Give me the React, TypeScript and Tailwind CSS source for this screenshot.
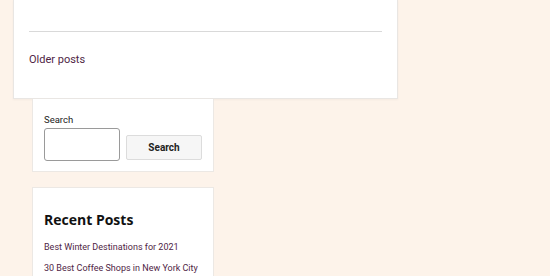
export default function App() {
  return (
    <div className="h-[276px] w-[550px] overflow-hidden bg-[#fdf3ea] font-['Roboto',sans-serif]">
      <div className="ml-[13px] w-[385px] h-[99px] border border-t-0 border-[#e9e6e3] bg-white px-[15px] shadow-[0_1px_2px_rgba(0,0,0,0.04)]">
        <div className="pt-[31px]">
          <div className="h-px bg-[#d9d9d9]" />
        </div>
        <a href="#" className="mt-[21px] block text-[11px] leading-[13px] text-[#4f2545]">
          Older posts
        </a>
      </div>

      <div className="ml-[32px] w-[182px] flex flex-col gap-[15px]">
        <div className="h-[73px] border border-t-0 border-[#ece8e4] bg-white px-[11px] pt-[15px]">
          <label className="block text-[9.5px] leading-[12px] text-[#222]">Search</label>
          <div className="mt-[2px] flex items-end gap-[6px]">
            <div className="h-[33px] w-[76px] rounded-[3px] border border-[#9a9a9a] bg-white" />
            <button
              type="button"
              className="mb-[1px] h-[25px] w-[76px] rounded-[2px] border border-[#dcdcdc] bg-[#f6f6f6] text-[10px] font-bold text-[#222]"
            >
              Search
            </button>
          </div>
        </div>

        <div className="h-[120px] border border-[#ece8e4] bg-white px-[11px] pt-[22px]">
          <h2 className="font-['Open_Sans',sans-serif] text-[14px] font-bold leading-[20px] text-[#111]">
            Recent Posts
          </h2>
          <ul className="mt-[11px] flex flex-col gap-[9px] text-[9px] leading-[12px] text-[#4f2545]">
            <li>
              <a href="#">Best Winter Destinations for 2021</a>
            </li>
            <li>
              <a href="#">30 Best Coffee Shops in New York City</a>
            </li>
          </ul>
        </div>
      </div>
    </div>
  );
}
